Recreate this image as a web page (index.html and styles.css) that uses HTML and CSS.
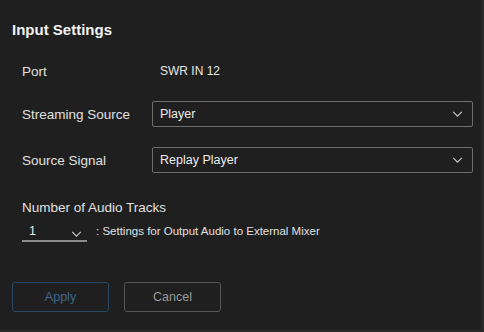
FILE: index.html
```html
<!DOCTYPE html>
<html lang="en">
<head>
    <meta charset="UTF-8">
    <title>Input Settings</title>
    <link rel="stylesheet" href="styles.css">
</head>
<body>
    <div class="panel">
        <h1>Input Settings</h1>

        <div class="row port-row">
            <span class="label">Port</span>
            <span class="value">SWR IN 12</span>
        </div>

        <div class="row">
            <span class="label">Streaming Source</span>
            <div class="select">
                <span>Player</span>
                <svg class="chev" width="12" height="7" viewBox="0 0 12 7"><path d="M1 1 L6 6 L11 1" fill="none" stroke="#c8c8c8" stroke-width="1.3"/></svg>
            </div>
        </div>

        <div class="row signal-row">
            <span class="label">Source Signal</span>
            <div class="select">
                <span>Replay Player</span>
                <svg class="chev" width="12" height="7" viewBox="0 0 12 7"><path d="M1 1 L6 6 L11 1" fill="none" stroke="#c8c8c8" stroke-width="1.3"/></svg>
            </div>
        </div>

        <div class="tracks">
            <div class="label">Number of Audio Tracks</div>
            <div class="tracks-line">
                <div class="mini-select">
                    <span>1</span>
                    <svg class="chev" width="12" height="7" viewBox="0 0 12 7"><path d="M1 1 L6 6 L11 1" fill="none" stroke="#c8c8c8" stroke-width="1.3"/></svg>
                </div>
                <span class="note">: Settings for Output Audio to External Mixer</span>
            </div>
        </div>

        <div class="buttons">
            <button class="btn apply">Apply</button>
            <button class="btn cancel">Cancel</button>
        </div>
    </div>
</body>
</html>
```

FILE: styles.css
```css
html, body {
    margin: 0;
    padding: 0;
    background-color: #2a2a2a;
}
body {
    font-family: 'Liberation Sans', Arial, sans-serif;
    color: #e6e6e6;
}
.panel {
    width: 481px;
    height: 330px;
    box-sizing: border-box;
    background-color: #1f1f1f;
    padding: 0 0 0 12px;
    overflow: hidden;
}
h1 {
    margin: 0;
    padding-top: 21px;
    font-size: 15px;
    font-weight: bold;
    color: #f2f2f2;
    line-height: 17px;
}
.row {
    display: flex;
    align-items: center;
    padding-left: 10px;
    height: 26px;
    margin-top: 19px;
}
.port-row {
    margin-top: 20px;
    margin-bottom: -2px;
}
.signal-row {
    margin-top: 20px;
}
.label {
    font-size: 13.5px;
    color: #e0e0e0;
    width: 130px;
}
.value {
    font-size: 12px;
    color: #e6e6e6;
    margin-left: 8px;
}
.select {
    width: 321px;
    height: 26px;
    box-sizing: border-box;
    border: 1px solid #6e6e6e;
    border-radius: 2px;
    display: flex;
    align-items: center;
    justify-content: space-between;
    padding: 0 9px 0 7px;
    font-size: 12.5px;
    color: #ececec;
}
.chev {
    width: 11px;
    height: 6px;
}
.tracks {
    padding-left: 10px;
    margin-top: 27px;
}
.tracks .label {
    width: auto;
    line-height: 16px;
}
.tracks-line {
    display: flex;
    align-items: center;
    margin-top: 6px;
}
.mini-select {
    width: 65px;
    height: 20px;
    box-sizing: border-box;
    border-bottom: 2px solid #8a8a8a;
    display: flex;
    align-items: center;
    justify-content: space-between;
    padding: 0 5px 0 7px;
    font-size: 12.5px;
    color: #ececec;
}
.mini-select .chev {
    margin-top: 6px;
}
.note {
    font-size: 11.5px;
    color: #e0e0e0;
    margin-left: 9px;
    margin-top: -2px;
}
.buttons {
    display: flex;
    gap: 15px;
    margin-top: 40px;
}
.btn {
    width: 97px;
    height: 30px;
    box-sizing: border-box;
    background-color: transparent;
    border-radius: 3px;
    font-family: 'Liberation Sans', Arial, sans-serif;
    font-size: 12.5px;
}
.apply {
    border: 1px solid #274866;
    color: #3e6690;
}
.cancel {
    border: 1px solid #555555;
    color: #9a9a9a;
}
```
